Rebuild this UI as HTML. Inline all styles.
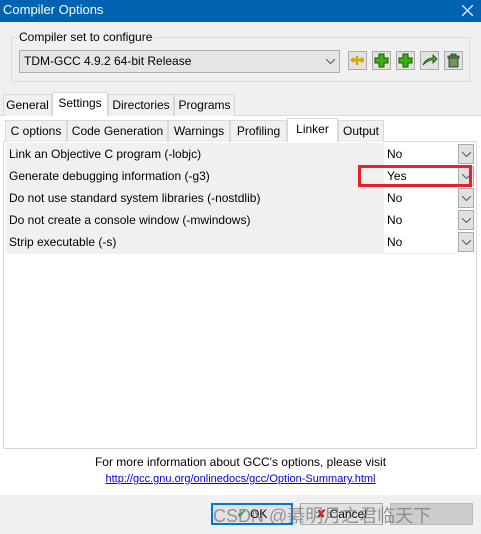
<!DOCTYPE html>
<html><head><meta charset="utf-8"><style>
*{box-sizing:border-box;margin:0;padding:0}
body{width:481px;height:534px;background:#f0f0f0;font-family:"Liberation Sans","Noto Sans CJK SC",sans-serif;font-size:12px;color:#000;position:relative;overflow:hidden}
.a{position:absolute}
.title{left:0;top:0;width:481px;height:22px;background:#0063b1;color:#fff;font-size:13px;line-height:20px;padding-left:3px}
.tb{width:19px;height:19px;border:1px solid #adadad;background:#e1e1e1;top:51px}
.tab{height:22px;border:1px solid #d9d9d9;border-bottom:none;background:#f0f0f0;line-height:21px;text-align:center}
.row{left:6px;width:468px;height:22px;line-height:22px}
.lbl{position:absolute;left:0;top:0;width:378px;height:22px;background:#f0f0f0;padding-left:3px}
.val{position:absolute;left:378px;top:0;width:72px;height:22px;background:#fff;padding-left:3px}
.dd{position:absolute;left:452px;top:1px;width:16px;height:20px;border:1px solid #adadad;background:#e1e1e1}
.dd svg,.cb svg{position:absolute;left:3px;top:7px}
.btn{top:503px;height:22px;border:1px solid #adadad;background:#e1e1e1;line-height:20px;text-align:center}
</style></head><body>
<div class="a title">Compiler Options<svg class="a" style="right:8px;top:5px" width="11" height="11"><path d="M0 0L11 11M11 0L0 11" stroke="#fff" stroke-width="1.3"/></svg></div>
<div class="a" style="left:11px;top:37px;width:459px;height:45px;border:1px solid #dcdcdc"></div>
<div class="a" style="left:17px;top:30px;background:#f0f0f0;padding:0 2px">Compiler set to configure</div>
<div class="a cb" style="left:19px;top:50px;width:321px;height:23px;border:1px solid #adadad;background:#e5e5e5;line-height:21px;padding-left:4px">TDM-GCC 4.9.2 64-bit Release<svg style="left:306px;top:8px" width="9" height="5"><path d="M0 0L4.5 4.5L9 0" stroke="#555" fill="none"/></svg></div>
<div class="a tb" style="left:348px"><svg width="17" height="17"><path d="M3 8h11M8 4v9M5 6l-2 2 2 2M12 6l2 2-2 2" stroke="#d0a800" stroke-width="2.5" fill="none"/></svg></div>
<div class="a tb" style="left:372px"><svg width="17" height="17"><path d="M6 2h5v4h4v5h-4v4H6v-4H2V6h4z" fill="#3cb010" stroke="#1a5a00"/></svg></div>
<div class="a tb" style="left:396px"><svg width="17" height="17"><path d="M6 2h5v4h4v5h-4v4H6v-4H2V6h4z" fill="#3cb010" stroke="#1a5a00"/></svg></div>
<div class="a tb" style="left:420px"><svg width="17" height="17"><path d="M2 13C4 8 8 6 12 6V3l4 4-4 4V8C8 8 5 10 2 13z" fill="#5aa040" stroke="#1a4a00" stroke-width=".8"/></svg></div>
<div class="a tb" style="left:444px"><svg width="17" height="17"><path d="M6 2h5v2H6z M3 4h11v2H3z M4 6h9v9H4z" fill="#6a9a50" stroke="#223" stroke-width=".8"/></svg></div>
<div class="a" style="left:0;top:115px;width:481px;height:380px;background:#fff;border-top:1px solid #d9d9d9"></div>
<div class="a tab" style="left:3px;top:94px;width:49px">General</div>
<div class="a tab" style="left:52px;top:92px;width:56px;height:24px;background:#fff;line-height:20px">Settings</div>
<div class="a tab" style="left:108px;top:94px;width:66px">Directories</div>
<div class="a tab" style="left:174px;top:94px;width:61px">Programs</div>
<div class="a" style="left:3px;top:141px;width:474px;height:308px;border:1px solid #d9d9d9;background:#fff"></div>
<div class="a tab" style="left:5px;top:120px;width:62px">C options</div>
<div class="a tab" style="left:67px;top:120px;width:101px">Code Generation</div>
<div class="a tab" style="left:168px;top:120px;width:62px">Warnings</div>
<div class="a tab" style="left:230px;top:120px;width:57px">Profiling</div>
<div class="a tab" style="left:287px;top:118px;width:51px;height:24px;background:#fff;line-height:20px">Linker</div>
<div class="a tab" style="left:338px;top:120px;width:46px">Output</div>
<div class="a row" style="top:143px"><div class="lbl">Link an Objective C program (-lobjc)</div><div class="val">No</div><div class="dd"><svg width="9" height="5"><path d="M0 0L4.5 4.5L9 0" stroke="#555" fill="none"/></svg></div></div>
<div class="a row" style="top:165px"><div class="lbl">Generate debugging information (-g3)</div><div class="val">Yes</div><div class="dd"><svg width="9" height="5"><path d="M0 0L4.5 4.5L9 0" stroke="#555" fill="none"/></svg></div></div>
<div class="a row" style="top:187px"><div class="lbl">Do not use standard system libraries (-nostdlib)</div><div class="val">No</div><div class="dd"><svg width="9" height="5"><path d="M0 0L4.5 4.5L9 0" stroke="#555" fill="none"/></svg></div></div>
<div class="a row" style="top:209px"><div class="lbl">Do not create a console window (-mwindows)</div><div class="val">No</div><div class="dd"><svg width="9" height="5"><path d="M0 0L4.5 4.5L9 0" stroke="#555" fill="none"/></svg></div></div>
<div class="a row" style="top:231px"><div class="lbl">Strip executable (-s)</div><div class="val">No</div><div class="dd"><svg width="9" height="5"><path d="M0 0L4.5 4.5L9 0" stroke="#555" fill="none"/></svg></div></div>
<div class="a" style="left:6px;top:253px;width:450px;height:1px;background:#f0f0f0"></div>
<div class="a" style="left:358px;top:165px;width:114px;height:22px;border:3px solid #e8202a"></div>
<div class="a" style="left:0;top:455px;width:481px;text-align:center">For more information about GCC's options, please visit</div>
<div class="a" style="left:0;top:473px;width:481px;text-align:center;font-size:11px;color:#0000ee;text-decoration:underline">http://gcc.gnu.org/onlinedocs/gcc/Option-Summary.html</div>
<div class="a btn" style="left:211px;width:82px;border:2px solid #0078d7;line-height:18px"><span style="color:#2a2">✔</span> OK</div>
<div class="a btn" style="left:300px;width:83px"><span style="color:#c00">✘</span> Cancel</div>
<div class="a btn" style="left:390px;width:83px;background:#ccc;border-color:#bbb"></div>
<div class="a" style="left:213px;top:502px;font-size:18px;color:rgba(120,120,120,.75);white-space:nowrap">CSDN @綦明月之君临天下</div>
</body></html>
